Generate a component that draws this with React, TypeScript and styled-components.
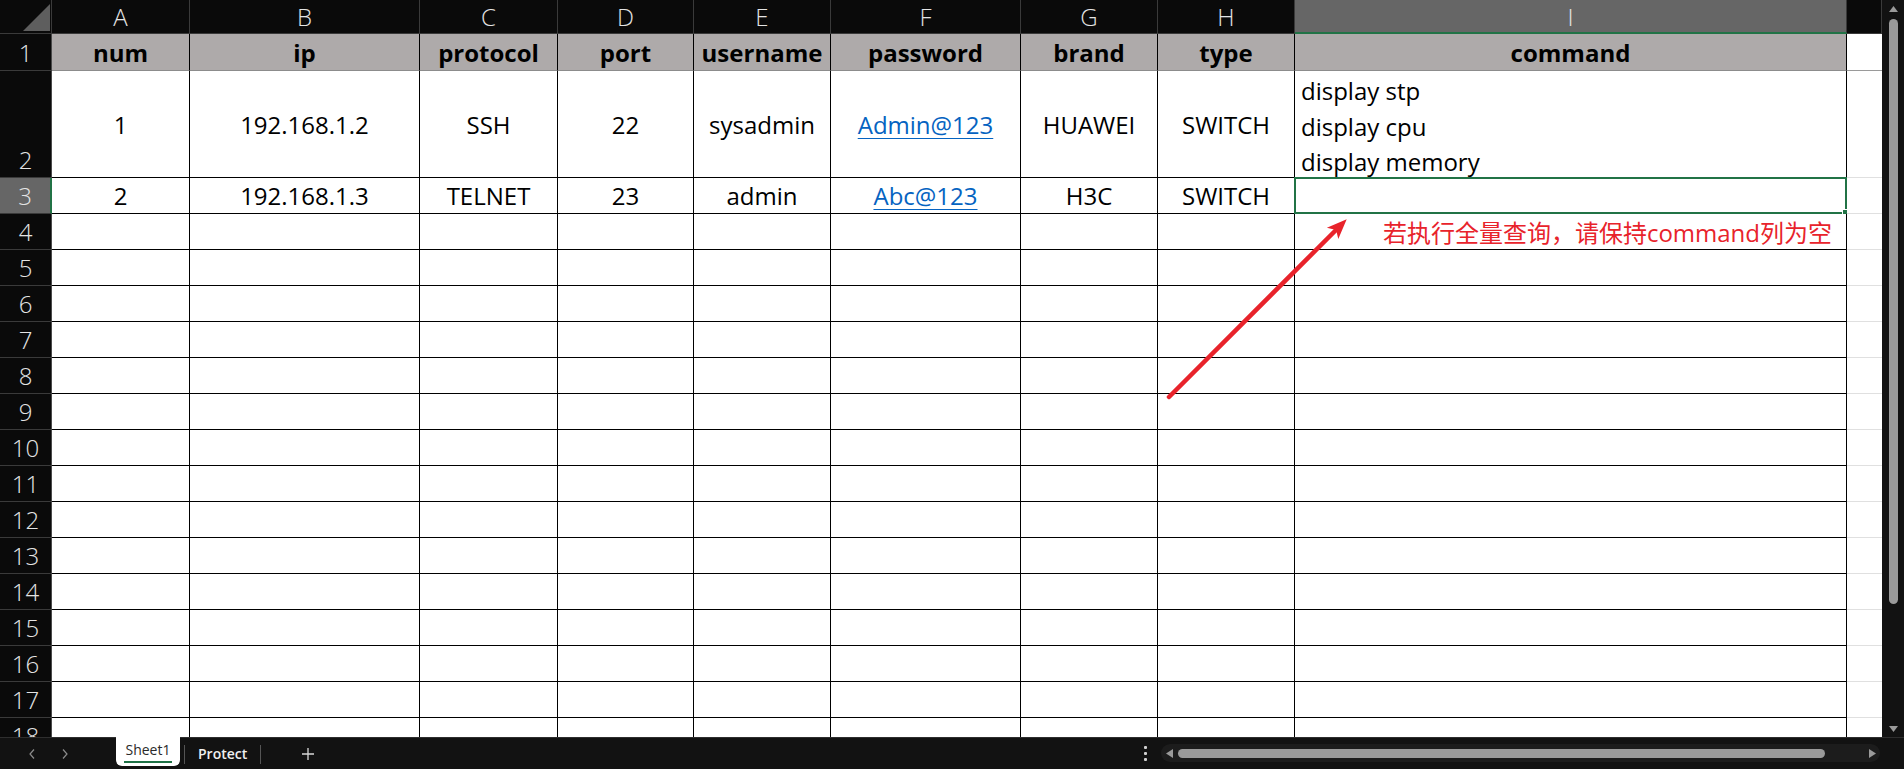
import React from "react";
import styled, { createGlobalStyle, css } from "styled-components";

const Global = createGlobalStyle`
  html, body { margin: 0; padding: 0; background: #000; overflow: hidden; }
  #root { width: 1904px; height: 769px; }
`;

const FONT = `"Open Sans", "Noto Sans CJK SC", "DejaVu Sans", sans-serif`;

const Frame = styled.div`
  width: 1904px;
  height: 769px;
  display: flex;
  flex-direction: column;
  font-family: ${FONT};
  background: #0a0a0a;
`;

const Body = styled.div`
  display: flex;
  height: 737px;
  overflow: hidden;
`;

const Sheet = styled.div`
  position: relative;
  display: grid;
  grid-template-columns: 52px 138px 230px 138px 136px 137px 190px 137px 137px 552px 35px;
  grid-template-rows: 34px 37px 107px repeat(16, 36px);
  width: 1882px;
  height: 737px;
  overflow: hidden;
  background: #fff;
`;

const Corner = styled.div`
  position: relative;
  background: #0a0a0a;
  border-right: 1px solid #3a3a3a;
  border-bottom: 1px solid #3a3a3a;
  &::after {
    content: "";
    position: absolute;
    right: 1px;
    bottom: 2px;
    width: 0;
    height: 0;
    border-style: solid;
    border-width: 0 0 27px 27px;
    border-color: transparent transparent #5e5e5e transparent;
  }
`;

const ColHeader = styled.div<{ $selected?: boolean }>`
  display: flex;
  align-items: center;
  justify-content: center;
  background: ${(p) => (p.$selected ? "#666666" : "#0a0a0a")};
  color: #e4e4e4;
  font-size: 24px;
  font-weight: 300;
  border-right: 1px solid #3a3a3a;
  box-sizing: border-box;
  border-bottom: ${(p) => (p.$selected ? "2px solid #217346" : "1px solid #3a3a3a")};
  padding-top: ${(p) => (p.$selected ? "1px" : "0")};
`;

const RowHeader = styled.div<{ $selected?: boolean }>`
  display: flex;
  align-items: flex-end;
  justify-content: center;
  padding-bottom: 1px;
  box-sizing: border-box;
  background: ${(p) => (p.$selected ? "#666666" : "#0a0a0a")};
  color: #e4e4e4;
  font-size: 24px;
  font-weight: 300;
  line-height: 33px;
  border-bottom: 1px solid #3a3a3a;
  border-right: ${(p) => (p.$selected ? "2px solid #217346" : "1px solid #4a4a4a")};
`;

type Kind = "title" | "data" | "outside" | "outsideTitle";

const Cell = styled.div<{ $kind: Kind; $align?: "center" | "left" | "right" }>`
  position: relative;
  display: flex;
  align-items: center;
  box-sizing: border-box;
  font-size: 24px;
  color: #000;
  white-space: nowrap;
  justify-content: ${(p) =>
    p.$align === "left" ? "flex-start" : p.$align === "right" ? "flex-end" : "center"};
  padding: ${(p) => (p.$align === "left" ? "0 0 0 6px" : p.$align === "right" ? "0 14px 0 0" : "0")};
  ${(p) =>
    p.$kind === "title" &&
    css`
      background: #aeaaaa;
      font-weight: 700;
      border-right: 1px solid #000;
      border-bottom: 1px solid #8c8c8c;
    `}
  ${(p) =>
    p.$kind === "data" &&
    css`
      background: #fff;
      border-right: 1px solid #000;
      border-bottom: 1px solid #000;
    `}
  ${(p) =>
    p.$kind === "outside" &&
    css`
      background: #fff;
      border-bottom: 1px solid #e0e0e0;
    `}
  ${(p) =>
    p.$kind === "outsideTitle" &&
    css`
      background: #fff;
      border-bottom: 1px solid #9a9a9a;
    `}
`;

const CommandList = styled.div`
  display: flex;
  flex-direction: column;
  line-height: 35.5px;
  padding-top: 5px;
`;

const Link = styled.span`
  color: #0563c1;
  text-decoration: underline;
  text-decoration-thickness: 1px;
  text-underline-offset: 4px;
`;

const Note = styled.span`
  color: #e8232b;
  font-size: 24px;
`;

const SelectionFrame = styled.div`
  position: absolute;
  top: -1px;
  left: -1px;
  right: -1px;
  bottom: -1px;
  border: 2px solid #217346;
  pointer-events: none;
  &::after {
    content: "";
    position: absolute;
    right: -4px;
    bottom: -4px;
    width: 5px;
    height: 5px;
    background: #217346;
    border: 1px solid #fff;
  }
`;

const ArrowLayer = styled.svg`
  position: absolute;
  left: 1160px;
  top: 210px;
  width: 200px;
  height: 200px;
  pointer-events: none;
  overflow: visible;
`;

const VScroll = styled.div`
  width: 22px;
  height: 737px;
  display: flex;
  flex-direction: column;
  align-items: center;
  background: #121212;
  box-sizing: border-box;
  padding: 5px 0 4px 1px;
`;

const Thumb = styled.div<{ $horizontal?: boolean }>`
  background: #9a9a9a;
  border-radius: 5px;
  ${(p) =>
    p.$horizontal
      ? css`
          width: 647px;
          height: 9px;
        `
      : css`
          width: 9px;
          height: 585px;
          margin-top: 6px;
        `}
`;

const Spacer = styled.div`
  flex: 1;
`;

const TabBar = styled.div`
  height: 32px;
  box-sizing: border-box;
  border-top: 1px solid #2e2e2e;
  background: #121212;
  display: flex;
  align-items: flex-start;
`;

const NavArea = styled.div`
  width: 116px;
  height: 31px;
  box-sizing: border-box;
  display: flex;
  align-items: center;
  padding-left: 24px;
  gap: 17px;
`;

const NavButton = styled.div`
  width: 16px;
  display: flex;
  justify-content: center;
`;

const ActiveTab = styled.div`
  margin-top: -1px;
  width: 64px;
  height: 29px;
  background: #fff;
  border-radius: 0 0 6px 6px;
  display: flex;
  flex-direction: column;
  align-items: center;
  justify-content: flex-start;
  padding-top: 3px;
  box-sizing: border-box;
  color: #2a2a2a;
  font-size: 14px;
  line-height: 20px;
`;

const TabUnderline = styled.div`
  width: 48px;
  height: 2px;
  background: #1e7145;
  margin-top: 1px;
`;

const TabSep = styled.div`
  width: 1px;
  height: 19px;
  margin-top: 7px;
  background: #555;
`;

const Tab = styled.div`
  height: 31px;
  display: flex;
  align-items: center;
  padding: 0 13px 0 13px;
  color: #f0f0f0;
  font-size: 14px;
  font-weight: 600;
`;

const Gap = styled.div<{ $w: number }>`
  width: ${(p) => p.$w}px;
`;

const AddButton = styled.div`
  width: 94px;
  height: 31px;
  display: flex;
  align-items: center;
  justify-content: center;
`;

const MoreDots = styled.div`
  width: 16px;
  height: 31px;
  display: flex;
  flex-direction: column;
  align-items: center;
  justify-content: center;
  gap: 3px;
  margin-right: 8px;
  & > span {
    width: 3px;
    height: 3px;
    background: #d0d0d0;
    border-radius: 1px;
  }
`;

const HTrack = styled.div`
  width: 719px;
  height: 18px;
  margin-top: 6px;
  margin-right: 24px;
  border-radius: 9px;
  background: #1c1c1c;
  display: flex;
  align-items: center;
  box-sizing: border-box;
  padding: 0 3px 0 4px;
  gap: 5px;
`;

const Tri = ({ dir }: { dir: "up" | "down" | "left" | "right" }) => {
  const pts: Record<string, string> = {
    up: "0,7 4.5,1 9,7",
    down: "0,1 4.5,7 9,1",
    left: "8,0 8,9 1,4.5",
    right: "0,0 0,9 7,4.5",
  };
  const horiz = dir === "left" || dir === "right";
  return (
    <svg width={horiz ? 8 : 9} height={horiz ? 9 : 8} viewBox={horiz ? "0 0 8 9" : "0 0 9 8"}>
      <polygon points={pts[dir]} fill="#9a9a9a" />
    </svg>
  );
};

const Chevron = ({ right }: { right?: boolean }) => (
  <svg width="8" height="12" viewBox="0 0 8 12">
    <path
      d={right ? "M2 1.5 L6 6 L2 10.5" : "M6 1.5 L2 6 L6 10.5"}
      fill="none"
      stroke="#8c8c8c"
      strokeWidth="1.2"
    />
  </svg>
);

const COLS = ["A", "B", "C", "D", "E", "F", "G", "H", "I", ""];
const TITLES = ["num", "ip", "protocol", "port", "username", "password", "brand", "type", "command"];

const ROW2: React.ReactNode[] = [
  "1",
  "192.168.1.2",
  "SSH",
  "22",
  "sysadmin",
  <Link key="l1">Admin@123</Link>,
  "HUAWEI",
  "SWITCH",
];
const ROW3: React.ReactNode[] = [
  "2",
  "192.168.1.3",
  "TELNET",
  "23",
  "admin",
  <Link key="l2">Abc@123</Link>,
  "H3C",
  "SWITCH",
];

export default function App() {
  const cells: React.ReactNode[] = [];
  cells.push(<Corner key="corner" />);
  COLS.forEach((c, i) =>
    cells.push(
      <ColHeader key={`h-${i}`} $selected={c === "I"}>
        {c}
      </ColHeader>
    )
  );

  // Row 1
  cells.push(<RowHeader key="r1">1</RowHeader>);
  TITLES.forEach((t) =>
    cells.push(
      <Cell key={`t-${t}`} $kind="title">
        {t}
      </Cell>
    )
  );
  cells.push(<Cell key="t-J" $kind="outsideTitle" />);

  // Row 2
  cells.push(<RowHeader key="r2">2</RowHeader>);
  ROW2.forEach((v, i) =>
    cells.push(
      <Cell key={`r2-${i}`} $kind="data">
        {v}
      </Cell>
    )
  );
  cells.push(
    <Cell key="r2-I" $kind="data" $align="left">
      <CommandList>
        <span>display stp</span>
        <span>display cpu</span>
        <span>display memory</span>
      </CommandList>
    </Cell>
  );
  cells.push(<Cell key="r2-J" $kind="outside" />);

  // Row 3
  cells.push(
    <RowHeader key="r3" $selected>
      3
    </RowHeader>
  );
  ROW3.forEach((v, i) =>
    cells.push(
      <Cell key={`r3-${i}`} $kind="data">
        {v}
      </Cell>
    )
  );
  cells.push(
    <Cell key="r3-I" $kind="data">
      <SelectionFrame />
    </Cell>
  );
  cells.push(<Cell key="r3-J" $kind="outside" />);

  // Rows 4..18
  for (let r = 4; r <= 18; r++) {
    cells.push(<RowHeader key={`r${r}`}>{r}</RowHeader>);
    for (let c = 0; c < 9; c++) {
      if (r === 4 && c === 8) {
        cells.push(
          <Cell key={`r${r}-${c}`} $kind="data" $align="right">
            <Note>若执行全量查询，请保持command列为空</Note>
          </Cell>
        );
      } else {
        cells.push(<Cell key={`r${r}-${c}`} $kind="data" />);
      }
    }
    cells.push(<Cell key={`r${r}-J`} $kind="outside" />);
  }

  return (
    <Frame>
      <Global />
      <Body>
        <Sheet>
          {cells}
          <ArrowLayer viewBox="0 0 200 200">
            <line
              x1="9"
              y1="187"
              x2="177"
              y2="19"
              stroke="#e8232b"
              strokeWidth="4.5"
              strokeLinecap="round"
            />
            <polygon points="186.7,9.3 178.3,29.1 176.1,19.9 166.9,17.7" fill="#e8232b" />
          </ArrowLayer>
        </Sheet>
        <VScroll>
          <Tri dir="up" />
          <Thumb />
          <Spacer />
          <Tri dir="down" />
        </VScroll>
      </Body>
      <TabBar>
        <NavArea>
          <NavButton>
            <Chevron />
          </NavButton>
          <NavButton>
            <Chevron right />
          </NavButton>
        </NavArea>
        <ActiveTab>
          <span>Sheet1</span>
          <TabUnderline />
        </ActiveTab>
        <Gap $w={4} />
        <TabSep />
        <Tab>Protect</Tab>
        <TabSep />
        <AddButton>
          <svg width="14" height="14" viewBox="0 0 14 14">
            <path d="M7 1 V13 M1 7 H13" stroke="#d8d8d8" strokeWidth="1.3" />
          </svg>
        </AddButton>
        <Spacer />
        <MoreDots>
          <span />
          <span />
          <span />
        </MoreDots>
        <HTrack>
          <Tri dir="left" />
          <Thumb $horizontal />
          <Spacer />
          <Tri dir="right" />
        </HTrack>
      </TabBar>
    </Frame>
  );
}
